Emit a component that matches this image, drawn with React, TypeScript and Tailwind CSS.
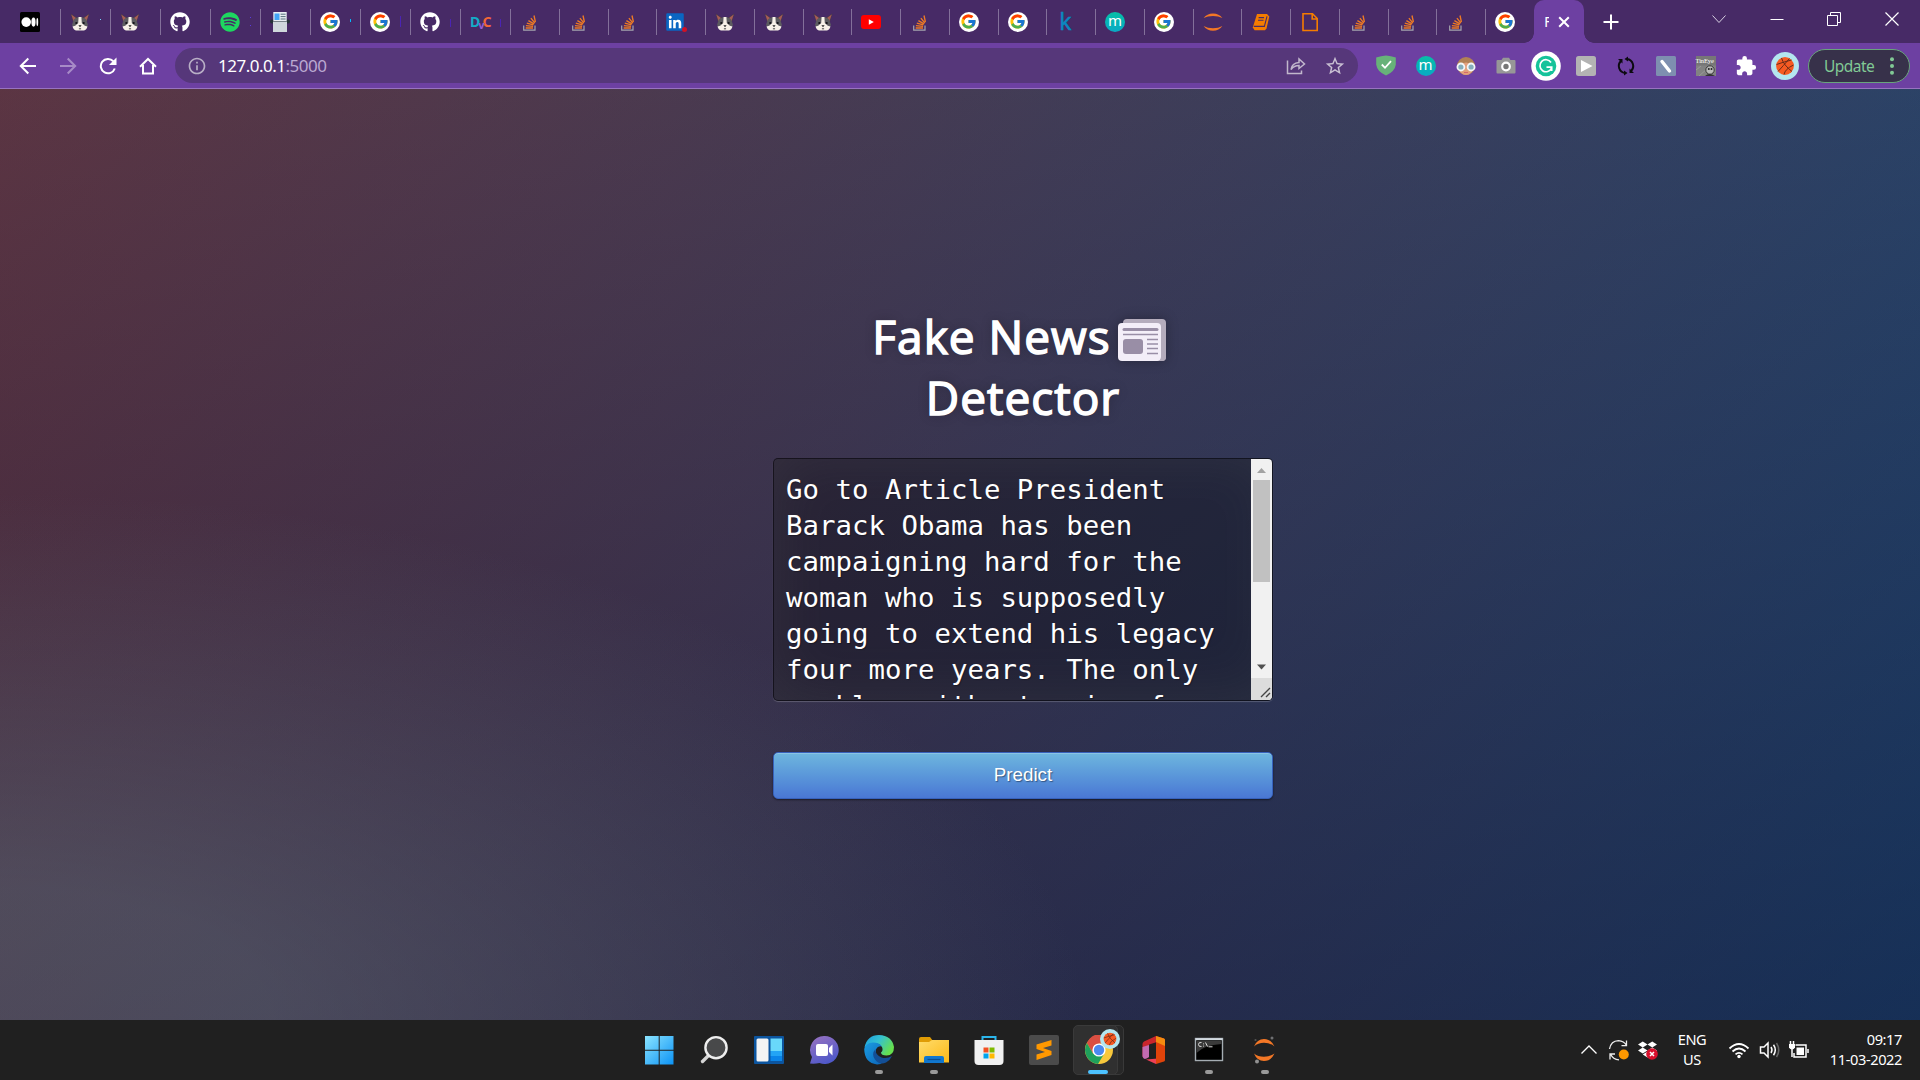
import React from 'react';
import { FaGithub, FaSpotify, FaLinkedin, FaDropbox } from 'react-icons/fa';
import { FcGoogle } from 'react-icons/fc';
import { MdExtension, MdStarBorder, MdInfoOutline } from 'react-icons/md';

const Dog = () => (
  <svg width="20" height="20" viewBox="0 0 20 20">
    <path d="M.6 1.6 7.400 6 3.400 10.800z" fill="#4a3c48" />
    <path d="M19.400 1.600 12.600 6 16.600 10.800z" fill="#4a3c48" />
    <path d="M1.300 2.600 6 6 3.600 9.500z" fill="#a85d55" />
    <path d="M18.700 2.600 14 6 16.400 9.500z" fill="#a85d55" />
    <path d="M3.800 7.500Q6 5.500 8.500 5h3q2.500.5 4.700 2.500L18 13l-2 3H4l-2-3z" fill="#5c5b60" />
    <path d="M8.600 5h2.800l.4 6 3 2.800 2.700.7Q16.500 18 14 18.500H6Q3.500 18 2.500 14.500l2.700-.7L8.200 11z" fill="#f7f1e8" />
    <circle cx="6.300" cy="11" r="1.100" fill="#121216" />
    <circle cx="13.700" cy="11" r="1.100" fill="#121216" />
    <path d="M8.400 13.200h3.200L10 15.200z" fill="#222" />
    <path d="M8.900 16.800h2.200" stroke="#444" />
  </svg>
);

const Stack = () => (
  <svg width="20" height="20" viewBox="0 0 20 20" fill="none">
    <path d="M3.700 13.500v4.700H15V13.500" stroke="#a5a5ae" strokeWidth="1.200" />
    <path d="M5.700 16h7.300M5.900 13.600l7.200.7M6.800 11.200l6.600 1.700M8.400 8.600l5.600 3.200M10.900 6.100l4 5M14 3.500l1.400 6.500" stroke="#ee7a25" strokeWidth="1.350" />
  </svg>
);

const Google = () => (
  <span className="flex size-5 items-center justify-center rounded-full bg-white">
    <FcGoogle size={17} />
  </span>
);

const MonoM = () => (
  <span className="flex size-5 items-center justify-center rounded-full bg-linear-to-b from-[#08bfa6] to-[#0ba9c4] pb-[3px] font-['Noto_Sans'] text-[15px] leading-none text-white">
    m
  </span>
);

const Medium = () => (
  <svg width="20" height="20" viewBox="0 0 20 20">
    <rect width="20" height="20" rx="1.5" fill="#000" />
    <circle cx="6.2" cy="10.1" r="4.8" fill="#fff" />
    <ellipse cx="13.5" cy="10.1" rx="2.1" ry="4.6" fill="#fff" />
    <ellipse cx="17.3" cy="10.1" rx=".9" ry="4.1" fill="#fff" />
  </svg>
);

const Printer = () => (
  <svg width="20" height="20" viewBox="0 0 20 20">
    <rect x="0" y="7.5" width="20" height="4" rx="2" fill="#253238" />
    <path d="M3.3 0h13.4v9H3.3z" fill="#e8eef2" />
    <path d="M4.5 1.5h5v6.5h-5z" fill="#42a5f5" />
    <path d="M10.6 2.2h5M10.6 4.6h5M10.6 7h5" stroke="#546e7a" strokeWidth="1" />
    <path d="M3 9.5h14V20H3z" fill="#cfd8dc" />
  </svg>
);

const Dvc = () => (
  <span className="flex w-5 items-center font-['Noto_Sans'] text-[14px] font-bold leading-5 tracking-[-1px]">
    <span className="text-[#13adc7]">D</span>
    <span className="-ml-px translate-y-[3px] text-[11px] text-[#945dd6]">v</span>
    <span className="-ml-px text-[#f46737]">C</span>
  </span>
);

const LinkedIn = () => (
  <span className="relative flex size-5 items-center">
    <svg width="18" height="18" viewBox="0 0 18 18" className="absolute">
      <rect x="1" y="1" width="16" height="16" fill="#fff" />
    </svg>
    <FaLinkedin size={20} color="#0a66c2" className="relative -ml-px" />
    <span className="absolute -right-px bottom-0 size-[5px] rounded-full bg-[#d11124]" />
  </span>
);

const YouTube = () => (
  <svg width="20" height="20" viewBox="0 0 20 20">
    <rect y="3" width="20" height="14" rx="3" fill="#f00" />
    <path d="M7.8 7.2v5.6l5-2.8z" fill="#fff" />
  </svg>
);

const Kaggle = () => (
  <span className="flex h-5 w-5 items-center pb-px pl-[3px] font-['Noto_Sans'] text-[23px] leading-none text-[#0b87c0] [-webkit-text-stroke:0.5px_#0b87c0]">k</span>
);

const Jupyter = () => (
  <svg width="20" height="20" viewBox="0 0 20 20" fill="#f37726">
    <path d="M.6 6Q4 1.5 10 1.5T19.4 6Q15.500 3.900 10 3.900T.6 6z" />
    <path d="M.6 14Q4 18.800 10 18.800T19.400 14Q15.500 16.300 10 16.300T.6 14z" />
  </svg>
);

const Book = () => (
  <svg width="20" height="20" viewBox="0 0 20 20">
    <path d="M6 2h10l2.300 2.500-2.800 12-1.500 1.700H3.600L1.800 15.500z" fill="#f57c00" />
    <path d="M2.800 14.400h10.600l2.600-10M7.600 5.600h5.500M7 8.200h5.500" stroke="#472a66" strokeWidth="1.100" fill="none" />
  </svg>
);

const FileIcon = () => (
  <svg width="20" height="20" viewBox="0 0 20 20" fill="none" stroke="#f57c00" strokeWidth="1.600">
    <path d="M3 1.800h9.500L17.200 6.500v12H3zM12.200 2v5h5" />
  </svg>
);

type Kind = keyof typeof glyphs;
const glyphs = {
  medium: Medium,
  dog: Dog,
  github: () => <FaGithub size={20} color="#fff" />,
  spotify: () => (
    <span className="rounded-full bg-[#472a66]">
      <FaSpotify size={20} color="#1ed760" />
    </span>
  ),
  printer: Printer,
  google: Google,
  dvc: Dvc,
  stack: Stack,
  linkedin: LinkedIn,
  youtube: YouTube,
  kaggle: Kaggle,
  mono: MonoM,
  jupyter: Jupyter,
  book: Book,
  file: FileIcon,
};

const wideTabs: [Kind, string][] = [
  ['dog', 'h-px bg-sky-300 mb-[5px]'],
  ['dog', ''],
  ['github', ''],
  ['spotify', 'h-[9px] border-y border-[#5a3be0] '],
  ['printer', ''],
  ['google', 'h-[3px] bg-sky-400 mb-[3px]'],
  ['google', 'h-[11px] bg-[#4a24b4]'],
  ['github', 'h-2 bg-[#4a24b4] mt-[3px]'],
  ['dvc', 'h-2 bg-[#4a24b4] mt-[3px]'],
];

const narrowTabs: Kind[] = [
  'stack', 'stack', 'stack', 'linkedin', 'dog', 'dog', 'dog', 'youtube', 'stack', 'google',
  'google', 'kaggle', 'mono', 'google', 'jupyter', 'book', 'file', 'stack', 'stack', 'stack',
];

function Glyph({ kind }: { kind: Kind }) {
  const C = glyphs[kind];
  return <C />;
}

function TabStrip() {
  return (
    <div className="flex h-[43px] bg-[#472a66]">
      <div className="flex h-[43px] w-[60px] items-center pl-5">
        <Glyph kind="medium" />
      </div>
      {wideTabs.map(([k, tail], i) => (
        <div key={i} className="flex h-[43px] w-[50px] items-center">
          <div className="mr-[9px] h-[26px] w-px bg-[#83709a]" />
          <div className="flex h-5 w-5 items-center">
            <Glyph kind={k} />
          </div>
          <div className={`ml-[10px] w-px ${tail}`} />
        </div>
      ))}
      {narrowTabs.map((k, i) => (
        <div key={i} className="flex h-[43px] w-[48.75px] items-center">
          <div className="mr-[9px] h-[26px] w-px bg-[#83709a]" />
          <div className="flex h-5 w-5 items-center">
            <Glyph kind={k} />
          </div>
        </div>
      ))}
      <div className="flex h-[43px] w-[39px] items-center">
        <div className="mr-[9px] h-[26px] w-px bg-[#83709a]" />
        <Google />
      </div>
      <div className="flex items-end">
        <div className="size-[10px] bg-[radial-gradient(circle_at_0_0,#472a66_9.500px,#6d40a2_10px)]" />
        <div className="flex h-[43px] w-[50px] items-center rounded-t-[10px] bg-[#6d40a2] pl-[10px]">
          <span className="w-[5px] overflow-hidden font-['Noto_Sans'] text-[15px] leading-none text-white">F</span>
          <svg width="12" height="12" viewBox="0 0 12 12" className="ml-[9px]" stroke="#fff" strokeWidth="2">
            <path d="M1.200 1.200l9.600 9.600M10.800 1.200l-9.600 9.600" />
          </svg>
        </div>
        <div className="size-[10px] bg-[radial-gradient(circle_at_100%_0,#472a66_9.500px,#6d40a2_10px)]" />
      </div>
      <div className="flex w-[34px] items-center justify-center">
        <svg width="16" height="16" viewBox="0 0 16 16" stroke="#fff" strokeWidth="2">
          <path d="M8 .5v15M.5 8h15" />
        </svg>
      </div>
      <div className="ml-auto grid h-[37px] grid-cols-[58px_57px_58px_57px] place-items-center">
        <svg width="14" height="14" viewBox="0 0 14 14" fill="none" stroke="#d8d0e2">
          <path d="M.5 3.500 7 10.500l6.500-7" />
        </svg>
        <svg width="14" height="14" viewBox="0 0 14 14" fill="none" stroke="#fff">
          <path d="M.5 7.500h13" />
        </svg>
        <svg width="14" height="14" viewBox="0 0 14 14" fill="none" stroke="#fff">
          <path d="M.5 3.500h10v10h-10zM3.500 3.500v-3h10v10h-3" />
        </svg>
        <svg width="14" height="14" viewBox="0 0 14 14" fill="none" stroke="#fff" strokeWidth="1.200">
          <path d="M.5.5l13 13M13.500.5l-13 13" />
        </svg>
      </div>
    </div>
  );
}

const Ball = ({ size }: { size: number }) => (
  <svg width={size} height={size} viewBox="0 0 28 28">
    <circle cx="14" cy="14" r="14" fill="#b4e6ef" />
    <circle cx="14" cy="14" r="8.900" fill="#f65a22" />
    <path d="M7 19.500Q12 14 18.500 6.500M10.500 6Q12.500 13 21 19.500M5.500 12.500Q14 9.500 20.500 8M13 22.500Q14 17 22.500 13" fill="none" stroke="#6b2c18" strokeWidth="1" />
  </svg>
);

function Toolbar() {
  return (
    <div className="flex h-[46px] items-center border-b border-[#9873c0] bg-[#6d40a2]">
      <div className="grid w-[175px] grid-cols-4 place-items-center pl-[8px] pr-[7px]">
        <svg width="18" height="18" viewBox="0 0 18 18" fill="none" stroke="#fff" strokeWidth="2">
          <path d="M17 9H2M9.300 1.500 1.800 9l7.500 7.500" />
        </svg>
        <svg width="18" height="18" viewBox="0 0 18 18" fill="none" stroke="#a78bc7" strokeWidth="2">
          <path d="M1 9h15M8.700 1.500 16.200 9l-7.500 7.500" />
        </svg>
        <svg width="18" height="18" viewBox="0 0 18 18" fill="none" stroke="#fff" strokeWidth="2">
          <path d="M15.800 11.500A7.200 7.200 0 1 1 14.300 4.200" />
          <path d="M17.500.5V8H10z" fill="#fff" stroke="none" />
        </svg>
        <svg width="18" height="18" viewBox="0 0 18 18" fill="none" stroke="#fff" strokeWidth="2">
          <path d="M1 9.700 9 2l8 7.700M4 8v8.500h10V8" />
        </svg>
      </div>
      <div className="flex h-[35px] w-[1183px] items-center rounded-full bg-[#56377a] pl-[12px] pr-[12px]">
        <MdInfoOutline size={20} color="#b9afc6" />
        <span className="ml-[11px] font-['Noto_Sans'] text-[17px] tracking-[-0.500px] text-white">
          127.0.0.1<span className="text-[#bba9d1]">:5000</span>
        </span>
        <svg width="20" height="20" viewBox="0 0 20 20" fill="none" stroke="#c1b7cc" strokeWidth="1.500" className="ml-auto">
          <path d="M1.500 4.500v13h14v-3M5 13.500Q6 7 13 6.500V3l5.500 5L13 12.500V9.500Q8 9.500 5 13.500z" />
        </svg>
        <MdStarBorder size={22} color="#c9c0d3" className="ml-[18px]" />
      </div>
      <div className="ml-[7.500px] grid grid-cols-[repeat(10,40px)] place-items-center">
        <svg width="20" height="21" viewBox="0 0 20 21">
          <path d="M10 .5Q15 .8 19.800 2.500V9.500Q19 16.500 10 20.500 1 16.500.2 9.500V2.500Q5 .8 10 .5z" fill="#67b279" />
          <path d="M5.800 9.500 9 12.800 15 6.200" stroke="#fff" strokeWidth="1.800" fill="none" />
        </svg>
        <MonoM />
        <svg width="20" height="20" viewBox="0 0 20 20">
          <ellipse cx="10" cy="10" rx="9" ry="9" fill="#b28155" />
          <path d="M3 9q7-5 14 0v4q-2 6-7 6t-7-6z" fill="#e3a07c" />
          <circle cx="4.900" cy="11" r="3.500" fill="#86aebb" stroke="#f3f7f8" strokeWidth="1.800" />
          <circle cx="15.100" cy="11" r="3.500" fill="#86aebb" stroke="#f3f7f8" strokeWidth="1.800" />
          <path d="M8 16.500h4" stroke="#d46a6a" />
        </svg>
        <svg width="20" height="18" viewBox="0 0 20 18">
          <path d="M1.500 3h4L7 .8h6L14.500 3h4q1 0 1 1v11.500q0 1-1 1h-17q-1 0-1-1V4q0-1 1-1z" fill="#979797" />
          <circle cx="10" cy="9.500" r="3.800" fill="#777" stroke="#fff" strokeWidth="2.200" />
        </svg>
        <svg width="30" height="30" viewBox="0 0 30 30">
          <circle cx="15" cy="15" r="14.800" fill="#fff" />
          <circle cx="15" cy="15" r="10.300" fill="#15c39a" />
          <path d="M20 11.500A6 6 0 1 0 20.500 17M15.500 16.200h5.200v3.800" fill="none" stroke="#fff" strokeWidth="1.700" />
        </svg>
        <svg width="20" height="20" viewBox="0 0 20 20">
          <rect width="20" height="20" rx="2.500" fill="#b3b3b3" />
          <path d="M5 4v12l11.500-6z" fill="#fff" />
        </svg>
        <svg width="20" height="20" viewBox="0 0 20 20" fill="none" stroke="#0c0a10" strokeWidth="2">
          <path d="M11 3a7 7 0 0 1 4 12M9 17A7 7 0 0 1 5 5" />
          <path d="M12 .5v5L8.500 3zM8 19.500v-5l3.500 2.500zM13.500 12.500v4.500H18zM6.500 7.500V3H2z" fill="#0c0a10" stroke="none" />
        </svg>
        <svg width="20" height="20" viewBox="0 0 20 20">
          <rect width="20" height="20" rx="1.500" fill="#7e8fb0" />
          <path d="M6 5.500 13.500 15" stroke="#fff" strokeWidth="3.400" strokeLinecap="round" />
        </svg>
        <span className="relative h-5 w-5 bg-[#777]">
          <svg width="20" height="20" viewBox="0 0 20 20" className="absolute">
            <path d="M0 9.500h20V20H0z" fill="#828282" />
            <path d="M0 14l5-4M3 20l8-7" stroke="#999" />
            <circle cx="14" cy="14" r="4.200" fill="#bbb" stroke="#383838" />
            <path d="M9 20q4-4 10 0z" fill="#333" />
            <circle cx="12.800" cy="13" r="1" fill="#222" />
            <circle cx="15.500" cy="13" r="1" fill="#222" />
          </svg>
          <span className="absolute left-0 top-0 font-['Liberation_Serif'] text-[6.500px] leading-[10px] tracking-[-0.100px] text-white">TinEye</span>
        </span>
        <MdExtension size={22} color="#fff" />
      </div>
      <div className="ml-[5.500px]">
        <Ball size={28} />
      </div>
      <div className="ml-[9px] flex h-[34px] w-[102px] items-center rounded-full border border-[#69a57c] bg-[#37314a] pl-[15px]">
        <span className="font-['Noto_Sans'] text-[15.500px] leading-5 tracking-[-0.550px] text-[#81c995]">Update</span>
        <svg width="4" height="18" viewBox="0 0 4 18" fill="#81c995" className="ml-auto mr-[15px]">
          <circle cx="2" cy="2.200" r="2" />
          <circle cx="2" cy="9" r="2" />
          <circle cx="2" cy="15.800" r="2" />
        </svg>
      </div>
    </div>
  );
}

const lines = [
  'Go to Article President',
  'Barack Obama has been',
  'campaigning hard for the',
  'woman who is supposedly',
  'going to extend his legacy',
  'four more years. The only',
  'problem with stumping for',
];

function Page() {
  return (
    <main className="h-[931px] bg-[radial-gradient(ellipse_farthest-corner_at_0%_100%,rgba(104,128,138,.4)_10%,rgba(138,114,76,0)_40%),linear-gradient(to_bottom,rgba(57,173,219,.25)_0%,rgba(42,60,87,.4)_100%),linear-gradient(135deg,#670d10_0%,#092756_100%)] pl-[773px] pt-[217px]">
      <div className="w-[500px]">
        <h1 className="text-center font-['Open_Sans'] text-[46px] font-normal leading-[61px] tracking-[1px] text-white [-webkit-text-stroke:1.500px_white] [text-shadow:0_0_12px_rgba(0,0,0,.3)]">
          <span className="flex items-center justify-center pr-[8px]">
            Fake News
            <svg width="48" height="42" viewBox="0 0 48 42" className="ml-[7px] mt-[7px] drop-shadow-[0_0_6px_rgba(0,0,0,0.3)]">
              <rect x="5" y="0" width="43" height="42" rx="4" fill="#b4acbc" />
              <rect x="0" y="4" width="43" height="38" rx="4" fill="#f3eef8" />
              <path d="M43 8v30q0 3-3 4h4q4 0 4-4V6z" fill="#b4acbc" />
              <path d="M6 10.500h33" stroke="#998ea6" strokeWidth="3" strokeLinecap="round" />
              <path d="M5 15.500h35M29 20.500h11M29 25h11M29 29.500h11M29 34.500h11" stroke="#998ea6" strokeWidth="1.400" />
              <rect x="5" y="20" width="20" height="15" rx="3" fill="#998ea6" />
            </svg>
          </span>
          <span className="block">Detector</span>
        </h1>
        <div className="mt-[30px] flex h-[243px] w-[500px] overflow-hidden rounded-[5px] border border-black/45 bg-black/30 shadow-[inset_0_-6px_56px_rgba(100,100,100,0.2),0_1px_1px_rgba(255,255,255,0.2)]">
          <div className="h-[240px] flex-1 overflow-hidden pl-[12px] pt-[13px] font-['DejaVu_Sans_Mono'] text-[27.400px] leading-[36px] text-white [text-shadow:1px_1px_1px_rgba(0,0,0,.3)]">
            {lines.map((l) => (
              <div key={l} className="whitespace-pre">{l}</div>
            ))}
          </div>
          <div className="flex h-full w-[21px] flex-col items-center bg-[#f1f1f1]">
            <svg width="21" height="21" viewBox="0 0 21 21">
              <path d="M6 14h9l-4.500-5z" fill="#a3a3a3" />
            </svg>
            <div className="h-[102px] w-[17px] bg-[#c1c1c1]" />
            <svg width="21" height="21" viewBox="0 0 21 21" className="mt-auto">
              <path d="M6 7.500h9l-4.500 5z" fill="#505050" />
            </svg>
            <svg width="21" height="22" viewBox="0 0 21 22" className="bg-[#dcdcdc]">
              <path d="M10 19l9-9M15 19l4-4" stroke="#444" strokeWidth="1.400" />
            </svg>
          </div>
        </div>
        <button className="mt-[51px] flex h-[47px] w-[500px] items-center justify-center rounded-[5px] border border-[#3762bc] bg-linear-to-b from-[#6eb6de] to-[#4a77d4] font-['Liberation_Sans'] text-[18.750px] text-white shadow-[inset_0_1px_0_rgba(255,255,255,0.2),0_1px_2px_rgba(0,0,0,0.5)] [text-shadow:1px_1px_1px_rgba(0,0,0,.4)]">
          Predict
        </button>
      </div>
    </main>
  );
}

const taskIcons: { running?: boolean; active?: boolean; icon: React.ReactNode }[] = [
  {
    icon: (
      <svg width="30" height="30" viewBox="0 0 30 30">
        <defs>
          <linearGradient id="win" x1="0" y1="0" x2="1" y2="1">
            <stop offset="0" stopColor="#8be4ff" />
            <stop offset="1" stopColor="#0c93f5" />
          </linearGradient>
        </defs>
        <path d="M1 1h13.700v13.700H1zM15.700 1h13.800v13.700H15.700zM1 15.700h13.700v13.800H1zM15.700 15.700h13.800v13.800H15.700z" fill="url(#win)" />
      </svg>
    ),
  },
  {
    icon: (
      <svg width="30" height="30" viewBox="0 0 30 30">
        <path d="M9.500 20.500 3.500 26.500" stroke="#d5d5d5" strokeWidth="3.400" strokeLinecap="round" />
        <circle cx="17" cy="12.700" r="10.600" fill="#48494a" stroke="#eee" strokeWidth="2.400" />
      </svg>
    ),
  },
  {
    icon: (
      <svg width="30" height="30" viewBox="0 0 30 30">
        <rect y="1" width="30" height="28" rx="1" fill="#0c559f" />
        <rect x="2.500" y="3.500" width="12" height="23" rx="1.500" fill="#f4f4f4" />
        <path d="M16.500 3.500h11.500V16H16.500z" fill="#69d8fa" />
        <path d="M16.500 16h11.500v5H16.500z" fill="#22a4f5" />
        <path d="M16.500 21h11.500v5H16.500z" fill="#0a84e8" />
      </svg>
    ),
  },
  {
    icon: (
      <svg width="30" height="30" viewBox="0 0 30 30">
        <defs>
          <linearGradient id="chat" x1="0" y1="0" x2=".5" y2="1">
            <stop offset="0" stopColor="#9b73c0" />
            <stop offset="1" stopColor="#5059c9" />
          </linearGradient>
        </defs>
        <path d="M15.500 1a14 14 0 1 1-5 27Q6 29 1 28.500L3 22A14 14 0 0 1 15.500 1z" fill="url(#chat)" />
        <rect x="7" y="9" width="12" height="12" rx="2" fill="#fff" />
        <path d="M20 13l3.500-3.500v11L20 17z" fill="#fff" />
      </svg>
    ),
  },
  {
    running: true,
    icon: (
      <svg width="30" height="30" viewBox="0 0 30 30">
        <defs>
          <linearGradient id="edgeA" x1="0" y1="0" x2="1" y2=".5">
            <stop offset="0" stopColor="#1b9de2" />
            <stop offset=".5" stopColor="#35c1d0" />
            <stop offset="1" stopColor="#66e04e" />
          </linearGradient>
          <linearGradient id="edgeB" x1="0" y1="0" x2="1" y2="1">
            <stop offset="0" stopColor="#1b9de2" />
            <stop offset="1" stopColor="#0b63b8" />
          </linearGradient>
        </defs>
        <path d="M.5 12.500Q3 0 15 0 28 .5 30 12q0 8.500-7.500 8.500-5.500 0-5.500-3 2.500-2 1-5.500-5-7-17.500.5z" fill="url(#edgeA)" />
        <path d="M.2 14Q1.500 8 9 7.500q6.500 0 9 4-4-1-6 3-1.500 10 8 12-3 3-7 2.900Q.5 28 .2 14z" fill="url(#edgeB)" />
        <path d="M11.500 14q-4.500 5-.5 10.500 4.500 6 11 3 4-2 6-6.500-5 3-10.500 1.500Q11 20 11.500 14z" fill="#134f96" />
      </svg>
    ),
  },
  {
    running: true,
    icon: (
      <svg width="30" height="30" viewBox="0 0 30 30">
        <defs>
          <linearGradient id="fold" x1="0" y1="0" x2="1" y2="1">
            <stop offset="0" stopColor="#ffdc6b" />
            <stop offset="1" stopColor="#fcb917" />
          </linearGradient>
        </defs>
        <path d="M0 4q0-2 2-2h9l3 4v6H0z" fill="#e09c05" />
        <path d="M0 7h10l3-2h17v22.500H0z" fill="url(#fold)" />
        <path d="M5 28v-5q0-2 2-2h16q2 0 2 2v5z" fill="#1177ce" />
        <path d="M8.500 24.500h13" stroke="#0a4e92" strokeWidth="1.200" />
      </svg>
    ),
  },
  {
    icon: (
      <svg width="30" height="30" viewBox="0 0 30 30">
        <path d="M8.500 7V2h13v5" fill="none" stroke="#2bb6ec" strokeWidth="2" />
        <path d="M.5 5h29v21q0 4-4 4h-21q-4 0-4-4z" fill="#f1f1f1" />
        <path d="M9.500 12.500H14.500v5h-5z" fill="#f25022" />
        <path d="M15.500 12.500H20.500v5h-5z" fill="#7fba00" />
        <path d="M9.500 18.500H14.500v5h-5z" fill="#00a4ef" />
        <path d="M15.500 18.500H20.500v5h-5z" fill="#ffb900" />
      </svg>
    ),
  },
  {
    icon: (
      <svg width="30" height="30" viewBox="0 0 30 30">
        <rect width="30" height="30" rx="2" fill="#4b4b4b" />
        <path d="M7.500 9.500 22.500 5v5.500L14 13l8.500 3v4L7.500 25v-5.500L16 17l-8.500-3z" fill="#ff9800" />
      </svg>
    ),
  },
  {
    active: true,
    icon: (
      <span className="relative">
        <svg width="30" height="30" viewBox="0 0 30 30">
          <circle cx="15" cy="15" r="14" fill="#f8c83c" />
          <path d="M29 8A14 14 0 0 0 2.900 8L9 18.500 15 8.500h12.300z" fill="#d94f42" />
          <path d="M2.900 8A14 14 0 0 0 14 29l6.300-10.500L9 18.500z" fill="#1fa15c" />
          <circle cx="15" cy="15" r="6.600" fill="#fff" />
          <circle cx="15" cy="15" r="5.200" fill="#4a8af0" />
        </svg>
        <span className="absolute -right-[6px] -top-[6px]">
          <Ball size={20} />
        </span>
      </span>
    ),
  },
  {
    icon: (
      <svg width="30" height="30" viewBox="0 0 30 30">
        <path d="M17 1 5 6.500Q3.500 7.500 3.500 9v12q1 3 4 2l2.500-1V9.500L18 7z" fill="#c9252c" />
        <path d="M3.500 12v9.500q1 3.500 4 2l2.500-1.500V10z" fill="#c26ab0" />
        <path d="M7 24.500 17 29l2-5.500z" fill="#ee4055" />
        <path d="M17 1l8 2.500q1 .5 1 1.500v20q0 1-1 1.500L17 29V1z" fill="#e0430a" />
        <path d="M17 1l8 2.500q1 .5 1 1.500v6l-9-4z" fill="#f58b10" />
      </svg>
    ),
  },
  {
    running: true,
    icon: (
      <svg width="30" height="30" viewBox="0 0 30 30">
        <rect x="1.500" y="3.500" width="27" height="22" fill="#000" stroke="#a5adb3" strokeWidth="1.400" />
        <path d="M1.500 4.200h27" stroke="#d2dae0" strokeWidth="2" />
        <path d="M2.500 6h25v3Q10 10 2.500 18z" fill="#3a3a3a" />
        <path d="M7.500 7.500q-3-.5-3 2t3 2M9.500 8.500v.8M9.500 10.700v.8M11.500 7.500l2 4M14.500 11.800h4" stroke="#ddd" fill="none" />
      </svg>
    ),
  },
  {
    running: true,
    icon: (
      <svg width="30" height="30" viewBox="0 0 30 30">
        <path d="M5 11.500Q8 4 15 4t10.500 7.500Q21 7.800 15 7.800T5 11.500zM5 18.500Q8 26 15 26t10.500-7.500Q21 21.800 15 21.800T5 18.500z" fill="#f37726" />
        <circle cx="23" cy="3" r="1.500" fill="#6f7072" />
        <circle cx="6.500" cy="5" r="1.100" fill="#555" />
        <circle cx="8" cy="26.500" r="2" fill="#919191" />
      </svg>
    ),
  },
];

function Taskbar() {
  return (
    <footer className="flex h-[60px] items-center bg-[#202020]">
      <div className="ml-[631px] flex">
        {taskIcons.map((t, i) => (
          <div key={i} className="relative flex h-[60px] w-[55.050px] items-center justify-center">
            {t.active && (
              <>
                <div className="absolute left-[8px] top-[5px] h-[50px] w-[45px] rounded-[5px] border border-[#393939] bg-[#282828]" />
                <div className="absolute left-[2px] top-[5px] h-[50px] w-[45px] rounded-[5px] border border-[#3a3a3a] bg-[#303030]" />
                <div className="absolute bottom-[6px] left-[17px] h-[4px] w-[20px] rounded-full bg-[#4cc2ff]" />
              </>
            )}
            {t.running && <div className="absolute bottom-[6px] left-[24px] h-[4px] w-[8px] rounded-full bg-[#9a9a9a]" />}
            <span className="relative flex">{t.icon}</span>
          </div>
        ))}
      </div>
      <div className="ml-auto flex h-full items-center pr-[18px] font-['Noto_Sans'] text-[14.600px] leading-5 tracking-[-0.400px] text-white">
        <svg width="18" height="12" viewBox="0 0 18 12" fill="none" stroke="#fff" strokeWidth="1.300">
          <path d="M1.500 9.500 9 2l7.500 7.500" />
        </svg>
        <svg width="22" height="22" viewBox="0 0 22 22" fill="none" stroke="#eee" strokeWidth="1.300" className="ml-[10px]">
          <path d="M1.500 10Q3 2 10.500 1.700 16 2 18.500 6.500M18.500 1.500v5.200h-5M2 20.500v-5.500h5M2.500 15Q5 20.500 11 20.800" />
          <circle cx="15.800" cy="15.500" r="5" fill="#ff9800" stroke="none" />
        </svg>
        <span className="relative ml-[8px] h-5 w-5">
          <FaDropbox size={19} color="#fff" />
          <svg width="12" height="12" viewBox="0 0 12 12" className="absolute bottom-0 right-0">
            <circle cx="6" cy="6" r="5.800" fill="#d90f2c" />
            <path d="M4 4l4 4M8 4l-4 4" stroke="#fff" strokeWidth="1.500" />
          </svg>
        </span>
        <span className="relative -top-px ml-[19px] w-[30px] text-center">
          ENG
          <br />
          US
        </span>
        <svg width="22" height="18" viewBox="0 0 22 18" fill="none" stroke="#fff" strokeWidth="1.800" className="ml-[21px]">
          <path d="M1.500 7.500q9.500-9 19 0M4.500 10.500q6.500-6 13 0M7.500 13.400q3.500-3 7 0" />
          <circle cx="11" cy="15.500" r="1.700" fill="#fff" stroke="none" />
        </svg>
        <svg width="22" height="18" viewBox="0 0 22 18" fill="none" stroke="#fff" strokeWidth="1.500" className="ml-[9px]">
          <path d="M1.500 6h3.500l4-4v14l-4-4H1.500zM12 6q2 3 0 6M14.500 3.800q3.600 5.200 0 10.400" />
          <path d="M17.500 2q4.500 7 0 14" stroke="#666" />
        </svg>
        <svg width="22" height="18" viewBox="0 0 22 18" fill="none" stroke="#fff" strokeWidth="1.500" className="ml-[7px]">
          <path d="M7.500 4h10.500v12h-12V12M20 8v4" />
          <path d="M8.500 6.500h7.500V14H8.500z" fill="#fff" stroke="none" />
          <path d="M1 3h6v3.500q-1 2-3 2t-3-2z" fill="#fff" stroke="none" />
          <path d="M2.500 0v3M5.500 0v3M4 8v8" />
        </svg>
        <span className="relative -top-px ml-[16px] w-[76px] text-right">
          09:17
          <br />
          11-03-2022
        </span>
      </div>
    </footer>
  );
}

export default function App() {
  return (
    <div className="flex h-[1080px] w-[1920px] flex-col overflow-hidden">
      <TabStrip />
      <Toolbar />
      <Page />
      <Taskbar />
    </div>
  );
}
